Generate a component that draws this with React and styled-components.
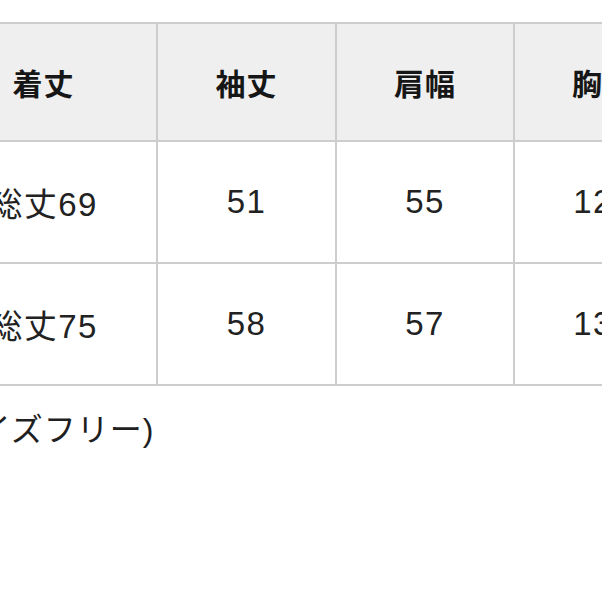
import React from 'react'
import styled, { createGlobalStyle } from 'styled-components'

const GlobalStyle = createGlobalStyle`
    html, body {
        margin: 0;
        padding: 0;
        background: #ffffff;
        overflow: hidden;
    }
    body {
        font-family: "Liberation Sans", "Noto Sans CJK JP", sans-serif;
        color: #1f1f1f;
    }
`

// the screenshot is a crop: the first column starts left of the window
const Page = styled.div`
    width: 800px;
    margin-left: -71px;
    padding-top: 22px;
`

const SizeTable = styled.table`
    border-collapse: collapse;
`

const Cell = styled.td`
    width: ${props => props.$width}px;
    min-width: ${props => props.$width}px;
    max-width: ${props => props.$width}px;
    height: ${props => (props.$head ? 116 : 120)}px;
    padding: 0;
    border: 2px solid #cdcdcd;
    background-color: ${props => (props.$head ? '#efefef' : '#ffffff')};
    text-align: center;
    vertical-align: middle;
    font-size: ${props => (props.$head ? 30 : 33)}px;
    font-weight: ${props => (props.$head ? 700 : 400)};
    color: ${props => (props.$head ? '#161616' : '#222222')};
    white-space: nowrap;
    overflow: hidden;
    letter-spacing: ${props => (props.$head ? 1 : 1.5)}px;
`

const Note = styled.div`
    margin-top: 24px;
    margin-left: 5px;
    font-size: 32px;
    line-height: 40px;
    color: #1f1f1f;
    letter-spacing: 1px;
    white-space: nowrap;
`

const widths = [225, 177, 176, 176]
const header = ['着丈', '袖丈', '肩幅', '胸囲']
const rows = [
    ['総丈69', '51', '55', '128'],
    ['総丈75', '58', '57', '136'],
]

const App = () => {
    return (
        <>
            <GlobalStyle />
            <Page>
                <SizeTable>
                    <thead>
                        <tr>
                            {header.map((h, i) => (
                                <Cell as='th' key={h} $head $width={widths[i]}>{h}</Cell>
                            ))}
                        </tr>
                    </thead>
                    <tbody>
                        {rows.map((row, r) => (
                            <tr key={r}>
                                {row.map((v, i) => (
                                    <Cell key={i} $width={widths[i]}>{v}</Cell>
                                ))}
                            </tr>
                        ))}
                    </tbody>
                </SizeTable>
                <Note>(サイズフリー)</Note>
            </Page>
        </>
    )
}

export default App
